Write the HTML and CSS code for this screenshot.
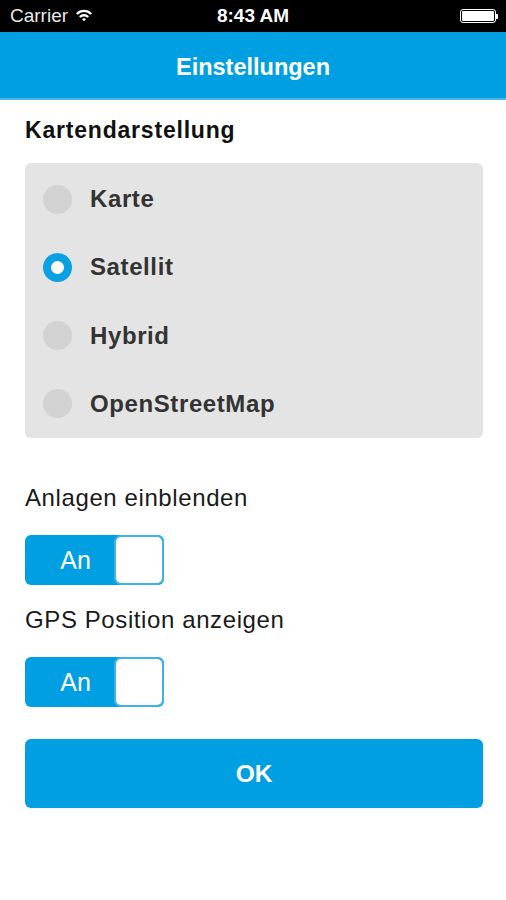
FILE: index.html
```html
<!DOCTYPE html>
<html lang="de">
<head>
<meta charset="utf-8">
<title>Einstellungen</title>
<link rel="stylesheet" href="styles.css">
</head>
<body>
<div class="status">
  <div class="status-left">Carrier
    <svg class="wifi" width="18" height="14" viewBox="0 0 18 14">
      <path d="M1 5.2 A11 11 0 0 1 17 5.2 L15.4 6.8 A8.8 8.8 0 0 0 2.6 6.8 Z" fill="#fff"/>
      <path d="M4 8.2 A7 7 0 0 1 14 8.2 L12.4 9.8 A4.8 4.8 0 0 0 5.6 9.8 Z" fill="#fff"/>
      <path d="M7 11.2 A3 3 0 0 1 11 11.2 L9 13.3 Z" fill="#fff"/>
    </svg>
  </div>
  <div class="status-time">8:43 AM</div>
  <div class="status-right">
    <span class="battery"><span class="battery-fill"></span></span><span class="battery-tip"></span>
  </div>
</div>
<header class="navbar">Einstellungen</header>
<main class="content">
  <h2 class="section-title">Kartendarstellung</h2>
  <div class="panel">
    <div class="radio-row"><span class="radio"></span><span class="radio-label">Karte</span></div>
    <div class="radio-row"><span class="radio checked"></span><span class="radio-label">Satellit</span></div>
    <div class="radio-row"><span class="radio"></span><span class="radio-label">Hybrid</span></div>
    <div class="radio-row"><span class="radio"></span><span class="radio-label">OpenStreetMap</span></div>
  </div>
  <div class="setting-label first">Anlagen einblenden</div>
  <div class="toggle"><span class="toggle-on">An</span><span class="knob"></span></div>
  <div class="setting-label">GPS Position anzeigen</div>
  <div class="toggle"><span class="toggle-on">An</span><span class="knob"></span></div>
  <button class="ok">OK</button>
</main>
</body>
</html>
```
FILE: styles.css
```css
* { box-sizing: border-box; }
html, body { margin: 0; padding: 0; background: #fff; }
body { width: 506px; height: 900px; font-family: "Liberation Sans", Arial, sans-serif; overflow: hidden; }

.status {
  height: 32px;
  background: #000;
  color: #fff;
  display: flex;
  align-items: center;
  justify-content: space-between;
  padding: 0 8px 0 10px;
  font-size: 19px;
  position: relative;
}
.status-left { display: flex; align-items: center; gap: 7px; color: #e8e8e8; }
.wifi { margin-top: -2px; }
.status-time {
  position: absolute;
  left: 0; right: 0;
  text-align: center;
  font-weight: bold;
  pointer-events: none;
}
.status-right { display: flex; align-items: center; }
.battery {
  width: 36px; height: 14px;
  border: 1px solid #fff;
  border-radius: 3px;
  padding: 1px;
  display: flex;
}
.battery-fill { flex: 1; background: #fff; border-radius: 1px; }
.battery-tip { width: 2px; height: 5px; background: #fff; border-radius: 0 1px 1px 0; }

.navbar {
  height: 68px;
  background: #009fe2;
  border-bottom: 2px solid #4ab8ee;
  color: #fff;
  font-weight: bold;
  font-size: 23.5px;
  display: flex;
  align-items: center;
  justify-content: center;
  padding-top: 4px;
}

.content { padding: 0 23px 0 25px; }
.section-title {
  margin: 0;
  font-size: 23px;
  letter-spacing: 0.8px;
  font-weight: bold;
  color: #111;
  padding-top: 17px;
  height: 63px;
}
.panel {
  background: #e4e4e4;
  border-radius: 6px;
  height: 275px;
  padding: 2px 0 0 18px;
  display: flex;
  flex-direction: column;
  justify-content: space-around;
}
.radio-row { display: flex; align-items: center; gap: 18px; height: 69px; }
.radio {
  width: 29px; height: 29px;
  border-radius: 50%;
  background: #d2d2d2;
  flex: none;
}
.radio.checked {
  background: #fff;
  border: 8px solid #0aa0e4;
}
.radio-label { font-size: 24px; letter-spacing: 0.6px; font-weight: bold; color: #333; }

.setting-label {
  font-size: 24px;
  letter-spacing: 0.6px;
  color: #1a1a1a;
  margin-top: 21px;
  height: 31px;
}
.setting-label.first { margin-top: 46px; }
.toggle {
  margin-top: 20px;
  width: 139px;
  height: 50px;
  border-radius: 6px;
  background: #009fe2;
  display: flex;
  overflow: hidden;
}
.toggle-on {
  width: 89px;
  padding-left: 12px;
  color: #fff;
  font-size: 25px;
  display: flex;
  align-items: center;
  justify-content: center;
}
.knob {
  flex: 1;
  background: #fff;
  border: 2px solid #3fb2ea;
  border-radius: 7px;
}
.ok {
  display: block;
  margin-top: 32px;
  width: 458px;
  height: 69px;
  background: #009fe2;
  border: none;
  border-radius: 6px;
  color: #fff;
  font-family: "Liberation Sans", Arial, sans-serif;
  font-size: 24.5px;
  font-weight: bold;
}
```
